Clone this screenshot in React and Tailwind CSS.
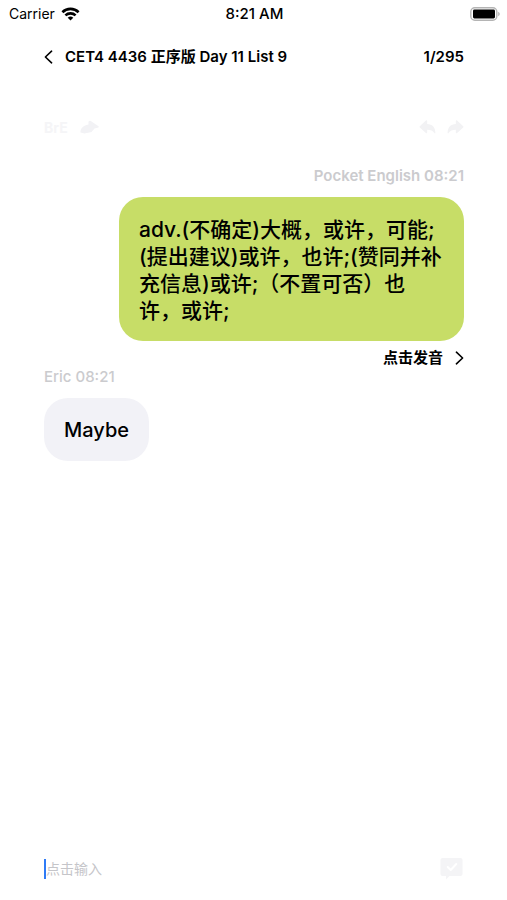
import React from "react";

function StatusBar() {
  return (
    <div className="grid h-7 grid-cols-3 items-center pl-[9px] pr-[7px] text-[14px] leading-5">
      <div className="flex items-center gap-[6px]">
        <span>Carrier</span>
        <svg className="h-[14px] w-[19px]" viewBox="0 0 18 14" fill="none" stroke="currentColor" strokeWidth="2.6" aria-label="Wi-Fi">
          <path d="M0.9 5.2a11.6 11.6 0 0 1 16.2 0" />
          <path d="M3.9 8.4a7.4 7.4 0 0 1 10.2 0" />
          <path d="M9 13.6 6.2 10.8a4 4 0 0 1 5.6 0Z" fill="currentColor" stroke="none" />
        </svg>
      </div>
      <span className="text-center text-[15px] font-medium">8:21 AM</span>
      <svg className="h-[14px] w-[30px] justify-self-end" viewBox="0 0 30 14" aria-label="Battery">
        <rect x="0.8" y="0.8" width="26" height="12.4" rx="4" fill="#fff" stroke="#b4b4b4" strokeWidth="1.4" />
        <rect x="3" y="2.6" width="22" height="8.8" rx="1.4" fill="#000" />
        <path d="M28.2 4.8c2 .8 2 3.6 0 4.4Z" fill="#b4b4b4" />
      </svg>
    </div>
  );
}

function Chevron({ left }) {
  return (
    <svg className="h-[14px] w-[9px]" viewBox="0 0 9 14" fill="none" stroke="currentColor" strokeWidth="1.6" strokeLinecap="round" strokeLinejoin="round" aria-hidden="true">
      <path d={left ? "M7.6 1.2 1.4 7l6.2 5.8" : "M1.4 1.2 7.6 7l-6.2 5.8"} />
    </svg>
  );
}

function TurnArrow({ left }) {
  return (
    <svg className="h-[14px] w-[17px]" viewBox="0 0 17 14" fill="currentColor" aria-hidden="true">
      <path
        d={
          left
            ? "M8.2 1v2.9c5 .2 8 3 8.2 8.9 0 .6-.6.8-1 .3-1.7-2.3-3.6-3.300-7.2-3.300v2.800c0 .7-.8 1-1.300.5L.8 7.500c-.4-.4-.4-.8 0-1.200L6.900.500C7.400 0 8.200.3 8.200 1Z"
            : "M8.800 1v2.900c-5 .2-8 3-8.200 8.900 0 .6.6.8 1 .3 1.700-2.300 3.600-3.300 7.200-3.300v2.800c0 .7.8 1 1.300.5l6.100-5.600c.4-.4.4-.8 0-1.200L10.100.500C9.600 0 8.800.3 8.800 1Z"
        }
      />
    </svg>
  );
}

export default function App() {
  return (
    <div className="flex min-h-screen flex-col bg-white font-['Inter','Noto_Sans_CJK_SC',sans-serif] text-black">
      <StatusBar />
      <header className="flex h-[57px] items-center pl-11 pr-[43px] text-[15px] leading-5 font-semibold">
        <button type="button" aria-label="Back" className="mr-3">
          <Chevron left />
        </button>
        <h1 className="grow">CET4 4436 正序版 Day 11 List 9</h1>
        <span>1/295</span>
      </header>

      <div className="mt-[30px] flex h-6 items-center justify-between pl-11 pr-[43px] text-[#f5f5f7]">
        <button type="button" aria-label="Accent BrE" className="flex items-center gap-3 text-[14px] font-bold">
          BrE
          <svg className="h-[14px] w-[19px] text-[#f2f2f5]" viewBox="0 0 19 14" fill="currentColor" aria-hidden="true">
            <path d="M8.500 1.500q1.500-1.500 3 0l7 4.800q.7.700-.1 1.300L14.500 8.500 11.500 12 4.500 13.400.400 12.500C.400 8 3.500 5.500 8.500 4.500Z" />
          </svg>
        </button>
        <div className="flex gap-[11px] text-[#f2f2f4]">
          <button type="button" aria-label="Undo"><TurnArrow left /></button>
          <button type="button" aria-label="Redo"><TurnArrow /></button>
        </div>
      </div>

      <main className="flex grow flex-col pl-11 pr-[43px] pt-[27px]">
        <section className="flex flex-col items-end">
          <p className="text-[15px] leading-5 font-semibold text-[#cbcbce]">Pocket English 08:21</p>
          <p className="mt-[11px] max-w-[345px] rounded-[24px] bg-[#c7dd67] px-5 pt-[19px] pb-[17px] text-[21px] leading-[27px] font-medium">
            adv.(不确定)大概，或许，可能;(提出建议)或许，也许;(赞同并补充信息)或许;（不置可否）也许，或许;
          </p>
          <button type="button" className="mt-2 flex h-[18px] items-center gap-3 text-[15px] leading-5 font-semibold">
            点击发音
            <Chevron />
          </button>
        </section>
        <section className="flex flex-col items-start">
          <p className="text-[15px] leading-5 font-medium text-[#cbcbce]">Eric 08:21</p>
          <p className="mt-[11px] rounded-[24px] bg-[#f2f2f7] px-5 pt-[19px] pb-[17px] text-[20px] leading-[27px] font-medium">Maybe</p>
        </section>
      </main>

      <footer className="flex items-center pb-5 pl-11 pr-[43px]">
        <span className="h-5 w-[2px] bg-[#2f7bf6]" aria-hidden="true" />
        <input
          aria-label="点击输入"
          placeholder="点击输入"
          className="h-5 min-w-0 grow bg-transparent text-[14px] leading-5 outline-none placeholder:text-[#c5c5c9]"
        />
        <button type="button" aria-label="Send" className="text-[#f4f4f6]">
          <svg className="h-[22px] w-[25px]" viewBox="0 0 24 22" fill="currentColor" aria-hidden="true">
            <path d="M3 0h18q2 0 2 2v14q0 2-2 2H10l-3.500 3.600V18H3q-2 0-2-2V2q0-2 2-2Z" />
            <path d="m8.200 9 3 3 5.600-6" fill="none" stroke="#fff" strokeWidth="2" strokeLinecap="round" strokeLinejoin="round" />
          </svg>
        </button>
      </footer>
    </div>
  );
}
